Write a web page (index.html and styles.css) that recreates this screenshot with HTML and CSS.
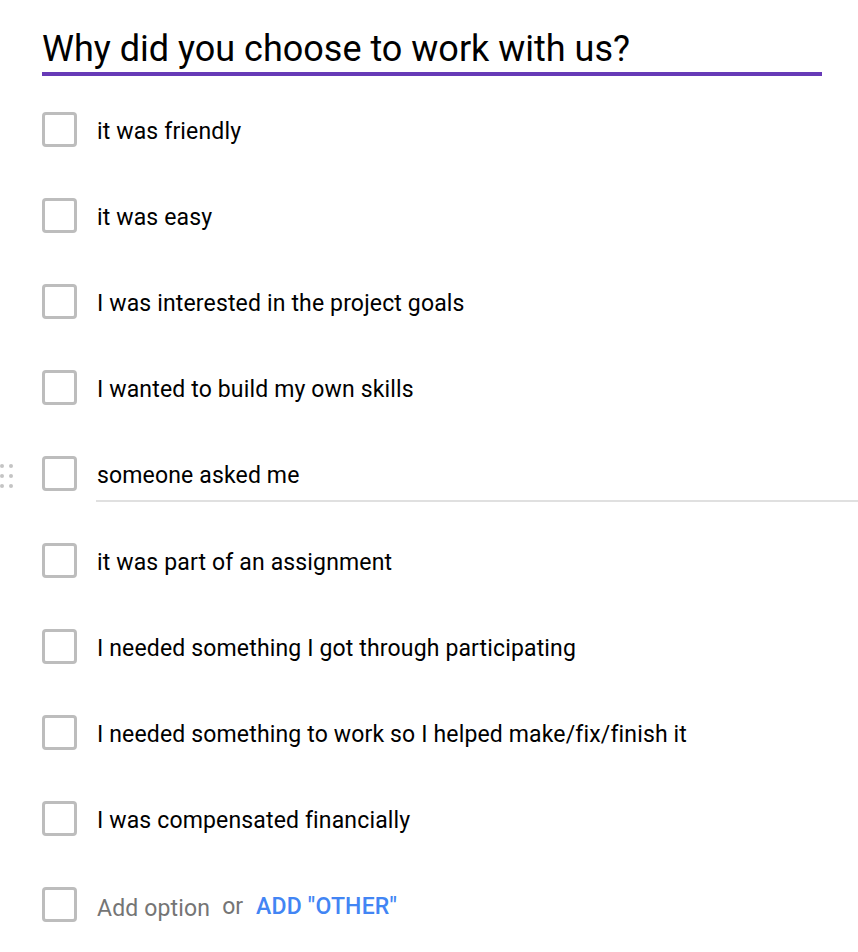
FILE: index.html
```html
<!DOCTYPE html>
<html>
<head>
<meta charset="utf-8">
<link rel="stylesheet" href="styles.css">
</head>
<body>
<div class="question">
  <div class="title-wrap">
    <div class="title">Why did you choose to work with us?</div>
  </div>
  <ul class="options">
    <li class="option"><span class="box"></span><span class="label">it was friendly</span></li>
    <li class="option"><span class="box"></span><span class="label">it was easy</span></li>
    <li class="option"><span class="box"></span><span class="label">I was interested in the project goals</span></li>
    <li class="option"><span class="box"></span><span class="label">I wanted to build my own skills</span></li>
    <li class="option active">
      <span class="handle"><i></i><i></i><i></i><i></i><i></i><i></i></span>
      <span class="box"></span><span class="label">someone asked me</span>
    </li>
    <li class="option"><span class="box"></span><span class="label">it was part of an assignment</span></li>
    <li class="option"><span class="box"></span><span class="label">I needed something I got through participating</span></li>
    <li class="option"><span class="box"></span><span class="label">I needed something to work so I helped make/fix/finish it</span></li>
    <li class="option"><span class="box"></span><span class="label">I was compensated financially</span></li>
    <li class="option add"><span class="box"></span><span class="label placeholder">Add option</span><span class="or">or</span><span class="other">ADD "OTHER"</span></li>
  </ul>
</div>
</body>
</html>
```

FILE: styles.css
```css
html, body {
  margin: 0;
  padding: 0;
  background: #ffffff;
}
body {
  font-family: Roboto, "Liberation Sans", sans-serif;
  color: rgba(0, 0, 0, 0.87);
}
.question {
  padding-left: 42px;
}
.title-wrap {
  width: 780px;
  padding-top: 28px;
  padding-bottom: 2px;
  border-bottom: 4px solid #673ab7;
}
.title {
  font-size: 36px;
  line-height: 42px;
  color: #000;
}
.options {
  list-style: none;
  margin: 10px 0 0 0;
  padding: 0;
}
.option {
  height: 86.2px;
  display: flex;
  align-items: center;
  position: relative;
}
.box {
  width: 35px;
  height: 35px;
  box-sizing: border-box;
  border: 3px solid #bdbdbd;
  border-radius: 4px;
  flex: none;
}
.label {
  margin-left: 20px;
  padding-top: 4px;
  font-size: 23px;
  letter-spacing: 0.15px;
  color: #000;
}
.option.active::after {
  content: "";
  position: absolute;
  left: 54px;
  right: 0;
  top: 69px;
  height: 2px;
  background: #e0e0e0;
}
.handle {
  position: absolute;
  left: -42px;
  top: 33px;
  width: 12px;
  display: grid;
  grid-template-columns: 4px 4px;
  column-gap: 5px;
  row-gap: 6px;
}
.handle i {
  width: 4px;
  height: 4px;
  border-radius: 50%;
  background: #c4c4c4;
  display: block;
}
.label.placeholder {
  color: #757575;
  padding-top: 8px;
}
.or {
  margin-left: 12px;
  padding-top: 4px;
  font-size: 23px;
  color: #757575;
}
.other {
  margin-left: 13px;
  padding-top: 4px;
  font-size: 23px;
  letter-spacing: 0.2px;
  font-weight: 500;
  color: #4285f4;
}
```
